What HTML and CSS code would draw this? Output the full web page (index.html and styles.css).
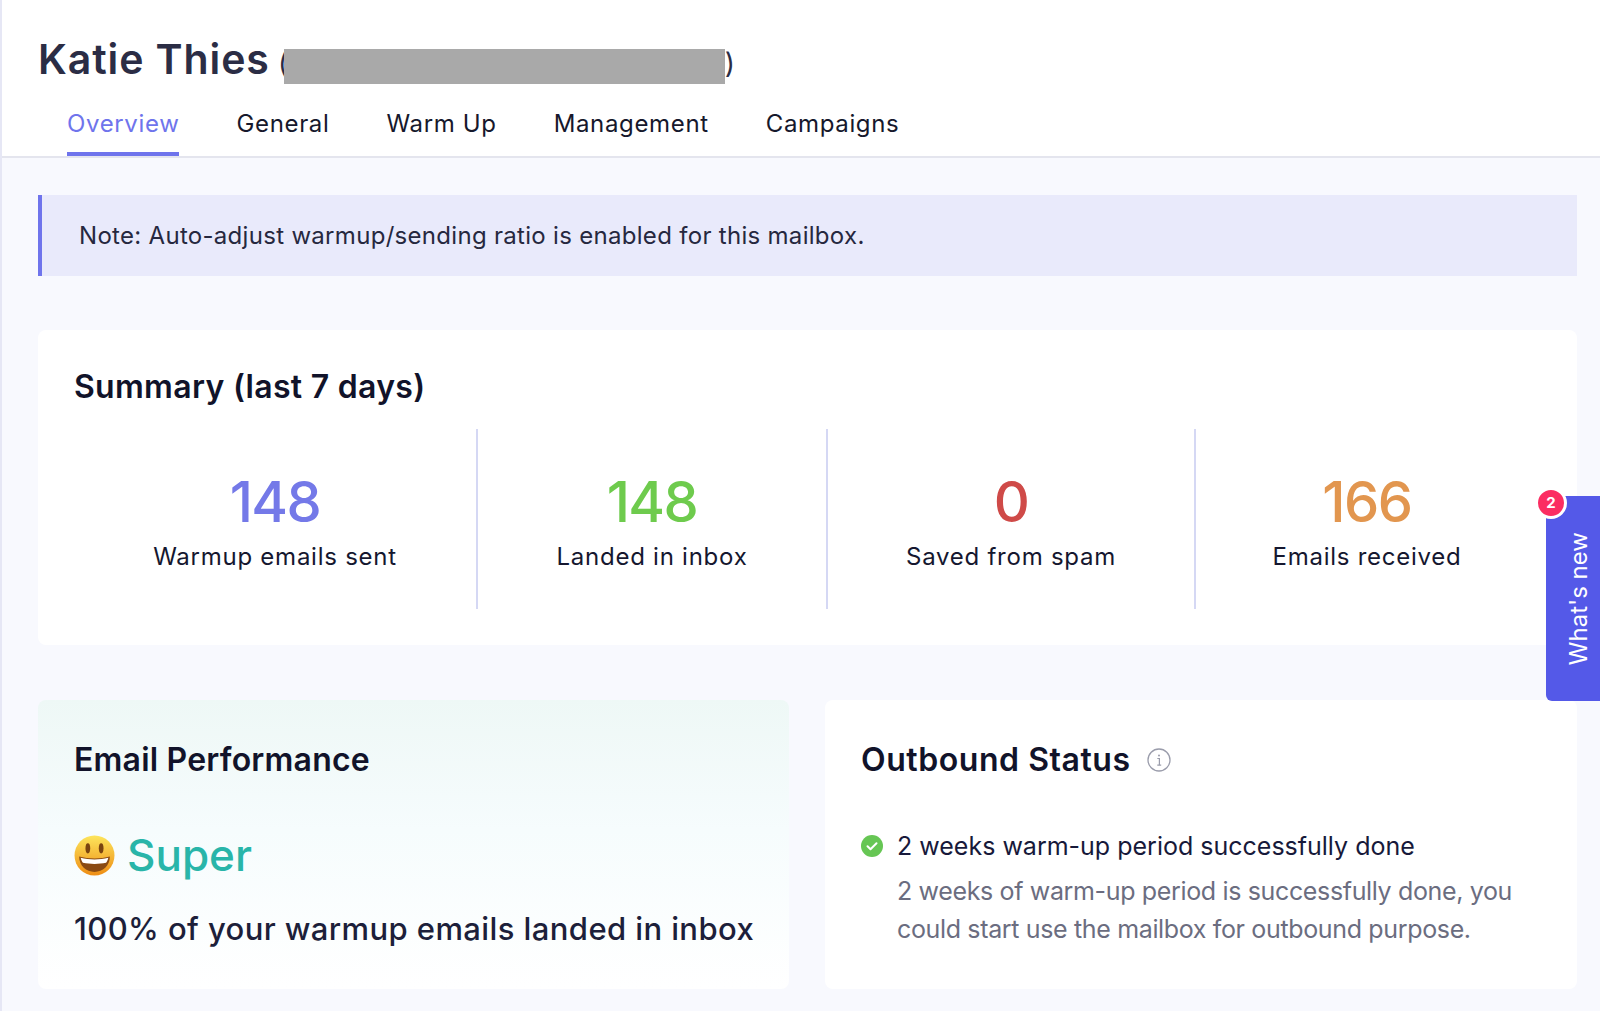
FILE: index.html
```html
<!DOCTYPE html>
<html lang="en">
<head>
<meta charset="utf-8">
<title>Katie Thies</title>
<link rel="stylesheet" href="styles.css">
</head>
<body>
<div class="page">
  <header class="head">
    <h1 class="title">Katie Thies <span class="paren"><span>(</span><span class="redact"></span><span>)</span></span></h1>
    <nav class="tabs">
      <a class="tab active">Overview</a>
      <a class="tab">General</a>
      <a class="tab">Warm Up</a>
      <a class="tab">Management</a>
      <a class="tab">Campaigns</a>
    </nav>
  </header>
  <main class="content">
    <div class="note">Note: Auto-adjust warmup/sending ratio is enabled for this mailbox.</div>
    <section class="card summary">
      <h2 class="card-title">Summary (last 7 days)</h2>
      <div class="stats">
        <div class="stat s1"><div class="num blue">148</div><div class="lbl">Warmup emails sent</div></div>
        <div class="stat s2"><div class="num green">148</div><div class="lbl">Landed in inbox</div></div>
        <div class="stat s3"><div class="num red">0</div><div class="lbl">Saved from spam</div></div>
        <div class="stat s4"><div class="num orange">166</div><div class="lbl">Emails received</div></div>
      </div>
    </section>
    <div class="bottom">
      <section class="card perf">
        <h2 class="card-title">Email Performance</h2>
        <div class="super">
          <svg class="smile" viewBox="0 0 40 40" aria-hidden="true">
            <defs><linearGradient id="f" x1="0" y1="0" x2="0" y2="1"><stop offset="0" stop-color="#fde55c"/><stop offset="1" stop-color="#ee8d14"/></linearGradient></defs>
            <circle cx="20" cy="20" r="19.5" fill="url(#f)"/>
            <ellipse cx="13.5" cy="13" rx="2.3" ry="5" fill="#7a4410"/>
            <ellipse cx="26.5" cy="13" rx="2.3" ry="5" fill="#7a4410"/>
            <path d="M5 21c9 2.6 21 2.6 30 0 0 9-7 15-15 15S5 30 5 21z" fill="#8a4a12"/>
            <path d="M6.500 22.300c8.500 2.200 18.500 2.200 27 0-.5 2.200-1.200 3.600-2.200 4.800-7 1.500-15.600 1.500-22.600 0-1-1.200-1.700-2.600-2.200-4.800z" fill="#fff"/>
          </svg>
          <span>Super</span>
        </div>
        <p class="perf-text">100% of your warmup emails landed in inbox</p>
      </section>
      <section class="card outbound">
        <h2 class="card-title with-icon">Outbound Status
          <svg class="info" viewBox="0 0 24 24" aria-hidden="true">
            <circle cx="12" cy="12" r="11" fill="none" stroke="#9a9cab" stroke-width="1.300"/>
            <circle cx="12" cy="7.500" r="1" fill="#9a9cab"/>
            <path d="M10.300 10.500H12.400V17M10.300 17.200H14.200" fill="none" stroke="#9a9cab" stroke-width="1.200"/>
          </svg>
        </h2>
        <div class="status">
          <svg class="check" viewBox="0 0 22 22" aria-hidden="true">
            <circle cx="11" cy="11" r="11" fill="#66c654"/>
            <path d="M6.500 11.300l3 3 6-6" fill="none" stroke="#fff" stroke-width="2" stroke-linecap="round" stroke-linejoin="round"/>
          </svg>
          <div>
            <div class="status-title">2 weeks warm-up period successfully done</div>
            <div class="status-desc">2 weeks of warm-up period is successfully done, you could start use the mailbox for outbound purpose.</div>
          </div>
        </div>
      </section>
    </div>
  </main>
  <aside class="whatsnew"><span class="badge">2</span><span class="wn-text">What's new</span></aside>
</div>
</body>
</html>
```
FILE: styles.css
```css
* { box-sizing: border-box; }
html, body { margin: 0; padding: 0; height: 100%; overflow: hidden; }
body { font-family: "Inter", "Liberation Sans", sans-serif; color: #14162e; background: #f8f9fe; }
.page { position: relative; width: 1600px; height: 1011px; border-left: 2px solid #e6e7f5; overflow: hidden; background: #f8f9fe; }
.head { height: 158px; background: #fff; border-bottom: 2px solid #e4e5ee; padding: 35px 0 0 36px; }
.title { margin: 0; height: 48px; font-size: 41px; line-height: 48px; font-weight: 600; color: #2b2d45; letter-spacing: .9px; white-space: nowrap; }
.paren { position: relative; display: inline-flex; justify-content: space-between; width: 457px; margin-left: -3px; font-size: 28px; font-weight: 400; letter-spacing: 0; vertical-align: 1px; }
.redact { position: absolute; left: 6px; top: 10px; width: 441px; height: 35px; background: #a9a9a9; }
.tabs { display: flex; gap: 57px; margin-top: 10px; padding-left: 29px; }
.tab { display: block; height: 63px; padding-top: 16px; font-size: 24px; line-height: 30px; color: #16182c; white-space: nowrap; letter-spacing: .65px; }
.tab.active { color: #6f74ec; border-bottom: 4px solid #6f74ec; }
.content { padding: 37px 23px 0 36px; }
.note { height: 81px; background: #e9eafb; border-left: 4px solid #6f74ec; padding-left: 37px; font-size: 24px; line-height: 81px; color: #26283f; letter-spacing: .3px; }
.card { background: #fff; border-radius: 8px; }
.summary { height: 315px; margin-top: 54px; padding: 38px 36px 0; }
.card-title { margin: 0; font-size: 32px; line-height: 38px; font-weight: 600; color: #11132a; letter-spacing: .3px; }
.stats { display: flex; margin: 23px -36px 0 -36px; height: 180px; }
.stat { text-align: center; padding-top: 42px; border-right: 2px solid #d5d8f4; }
.s1 { width: 440px; padding-left: 36px; }
.s2 { width: 350px; }
.s3 { width: 368px; }
.s4 { flex: 1; border-right: 0; padding-right: 39px; }
.num { font-size: 56px; line-height: 62px; font-weight: 500; letter-spacing: -1.5px; }
.blue { color: #7479e8; }
.green { color: #6ecb4d; }
.red { color: #cf4a48; }
.orange { color: #e2964f; }
.lbl { margin-top: 9px; font-size: 24px; line-height: 30px; color: #15172f; letter-spacing: .75px; }
.bottom { display: flex; gap: 36px; margin-top: 55px; }
.perf, .outbound { height: 289px; padding: 41px 36px 0; }
.perf { width: 751px; background: linear-gradient(180deg, #eef8f6 0%, #f6fcfd 45%, #ffffff 100%); }
.perf .card-title { letter-spacing: .2px; }
.outbound { flex: 1; }
.super { display: flex; align-items: center; gap: 12px; margin-top: 48px; font-size: 44px; line-height: 56px; font-weight: 500; color: #29b5a9; }
.smile { width: 41px; height: 41px; display: block; }
.perf-text { margin: 26px 0 0; font-size: 31px; line-height: 40px; font-weight: 500; color: #1d1f3a; letter-spacing: .4px; white-space: nowrap; }
.with-icon { display: flex; align-items: center; gap: 16px; letter-spacing: .55px; }
.info { width: 24px; height: 24px; }
.status { display: flex; gap: 14px; margin-top: 51px; }
.check { width: 22px; height: 22px; flex: none; margin-top: 5px; }
.status-title { font-size: 25px; line-height: 32px; color: #17193a; letter-spacing: 0; white-space: nowrap; }
.status-desc { margin-top: 10px; font-size: 25px; line-height: 38px; color: #6b6d80; letter-spacing: -.35px; }
.whatsnew { position: absolute; left: 1544px; top: 496px; width: 54px; height: 205px; background: #5459e8; border-radius: 6px 0 0 6px; }
.badge { position: absolute; left: -11px; top: -9px; width: 32px; height: 32px; border-radius: 50%; background: #fb2d62; border: 3px solid #fff; color: #fff; font-size: 15px; font-weight: 700; line-height: 26px; text-align: center; }
.wn-text { position: absolute; left: 19px; bottom: 36px; writing-mode: vertical-rl; transform: rotate(180deg); font-size: 24px; line-height: 28px; color: #fff; white-space: nowrap; }
```
